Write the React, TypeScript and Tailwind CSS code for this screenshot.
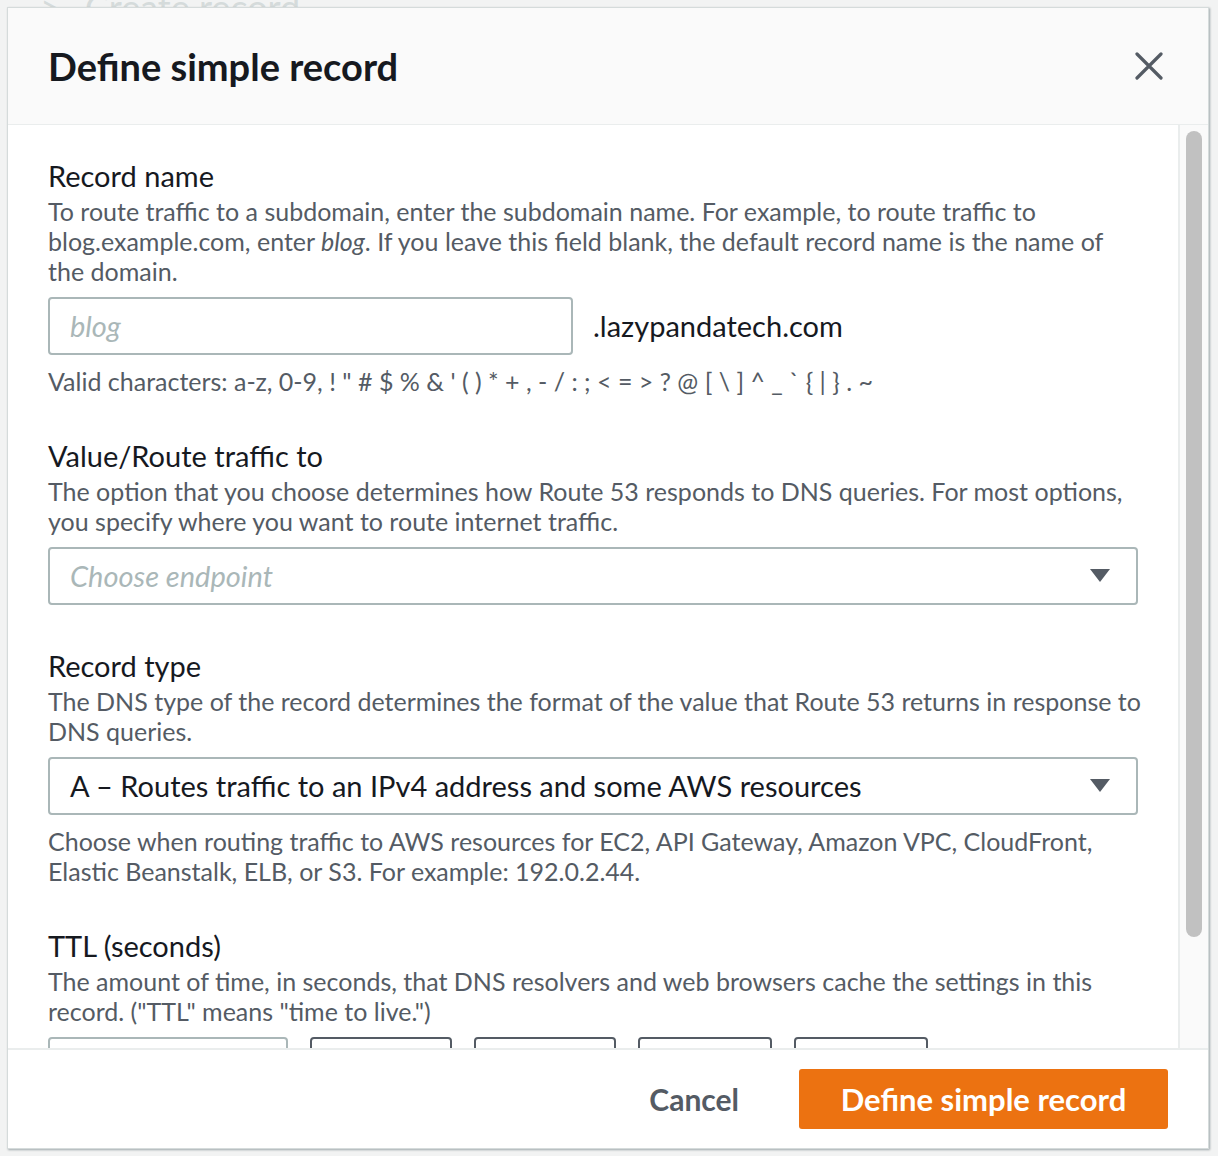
import React from "react";

const font = { fontFamily: "Lato, 'Open Sans', sans-serif" };

function Label({ children }: { children: React.ReactNode }) {
  return <div className="text-[29px] leading-[36px] text-[#16191f]">{children}</div>;
}

function Desc({ children, className = "" }: { children: React.ReactNode; className?: string }) {
  return <div className={"text-[25px] leading-[30px] text-[#545b64] " + className}>{children}</div>;
}

function Caret() {
  return (
    <svg width="20" height="14" viewBox="0 0 20 14" className="shrink-0">
      <path d="M0 0 H20 L10 13 Z" fill="#545b64" />
    </svg>
  );
}

export default function App() {
  return (
    <div className="relative w-[1218px] h-[1156px] overflow-hidden bg-[#f2f3f3]" style={font}>
      {/* faint background page */}
      <div className="flex items-center gap-6 pl-[40px] -mt-[20px] text-[36px] text-[#d5dbdb]">
        <span>&gt;</span>
        <span>Create record</span>
      </div>

      {/* modal */}
      <div className="absolute left-[7px] top-[7px] w-[1202px] h-[1142px] flex flex-col bg-white border border-[#d5dbdb] shadow-[1px_1px_2px_rgba(0,28,36,0.35)]">
        <div className="h-[117px] shrink-0 bg-[#fafafa] border-b border-[#eaeded] flex items-center justify-between pl-[40px] pr-[45px]">
          <div className="text-[38px] font-bold text-[#16191f] leading-none">Define simple record</div>
          <svg width="28" height="28" viewBox="0 0 28 28">
            <path d="M2 2 L26 26 M26 2 L2 26" stroke="#545b64" strokeWidth="3.2" strokeLinecap="round" />
          </svg>
        </div>

        <div className="flex-1 flex min-h-0">
          <div className="flex-1 overflow-hidden pl-[40px] pr-[40px]">
            <div className="pt-[33px]">
              <Label>Record name</Label>
              <Desc className="mt-[2px]">
                To route traffic to a subdomain, enter the subdomain name. For example, to route traffic to blog.example.com, enter <i>blog</i>. If you leave this field blank, the default record name is the name of the domain.
              </Desc>
              <div className="mt-[11px] flex items-center gap-[20px]">
                <div className="w-[525px] h-[58px] rounded-[4px] border-2 border-[#aab7b8] flex items-center px-[20px] text-[29px] italic text-[#aab7b8]">
                  blog
                </div>
                <div className="text-[29px] text-[#16191f]">.lazypandatech.com</div>
              </div>
              <Desc className="mt-[11px]">
                Valid characters: a-z, 0-9, ! " # $ % &amp; ' ( ) * + , - / : ; &lt; = &gt; ? @ [ \ ] ^ _ ` {"{"} | {"}"} . ~
              </Desc>
            </div>

            <div className="mt-[42px]">
              <Label>Value/Route traffic to</Label>
              <Desc className="mt-[2px]">
                The option that you choose determines how Route 53 responds to DNS queries. For most options, you specify where you want to route internet traffic.
              </Desc>
              <div className="mt-[11px] h-[58px] rounded-[4px] border-2 border-[#aab7b8] flex items-center justify-between pl-[20px] pr-[26px]">
                <span className="text-[29px] italic text-[#aab7b8]">Choose endpoint</span>
                <Caret />
              </div>
            </div>

            <div className="mt-[43px]">
              <Label>Record type</Label>
              <Desc className="mt-[2px] -mr-[14px]">
                The DNS type of the record determines the format of the value that Route 53 returns in response to DNS queries.
              </Desc>
              <div className="mt-[11px] h-[58px] rounded-[4px] border-2 border-[#aab7b8] flex items-center justify-between pl-[20px] pr-[26px]">
                <span className="text-[29px] text-[#16191f]">A – Routes traffic to an IPv4 address and some AWS resources</span>
                <Caret />
              </div>
              <Desc className="mt-[11px]">
                Choose when routing traffic to AWS resources for EC2, API Gateway, Amazon VPC, CloudFront, Elastic Beanstalk, ELB, or S3. For example: 192.0.2.44.
              </Desc>
            </div>

            <div className="mt-[42px]">
              <Label>TTL (seconds)</Label>
              <Desc className="mt-[2px]">
                The amount of time, in seconds, that DNS resolvers and web browsers cache the settings in this record. ("TTL" means "time to live.")
              </Desc>
              <div className="mt-[11px] flex gap-[22px]">
                <div className="w-[240px] h-[58px] rounded-[4px] border-2 border-[#aab7b8]" />
                <div className="w-[142px] h-[58px] rounded-[4px] border-2 border-[#545b64]" />
                <div className="w-[142px] h-[58px] rounded-[4px] border-2 border-[#545b64]" />
                <div className="w-[134px] h-[58px] rounded-[4px] border-2 border-[#545b64]" />
                <div className="w-[134px] h-[58px] rounded-[4px] border-2 border-[#545b64]" />
              </div>
            </div>
          </div>

          <div className="w-[30px] shrink-0 bg-[#fafafa] border-l-2 border-[#eaeded] pt-[6px] flex justify-center">
            <div className="w-[16px] h-[806px] rounded-full bg-[#c1c1c1]" />
          </div>
        </div>

        <div className="h-[100px] shrink-0 border-t-2 border-[#eaeded] flex items-center justify-end gap-[60px] pr-[40px]">
          <span className="text-[30px] font-bold text-[#545b64]">Cancel</span>
          <div className="w-[369px] h-[60px] rounded-[3px] bg-[#ec7211] flex items-center justify-center text-[31px] font-bold text-white">
            Define simple record
          </div>
        </div>
      </div>
    </div>
  );
}
